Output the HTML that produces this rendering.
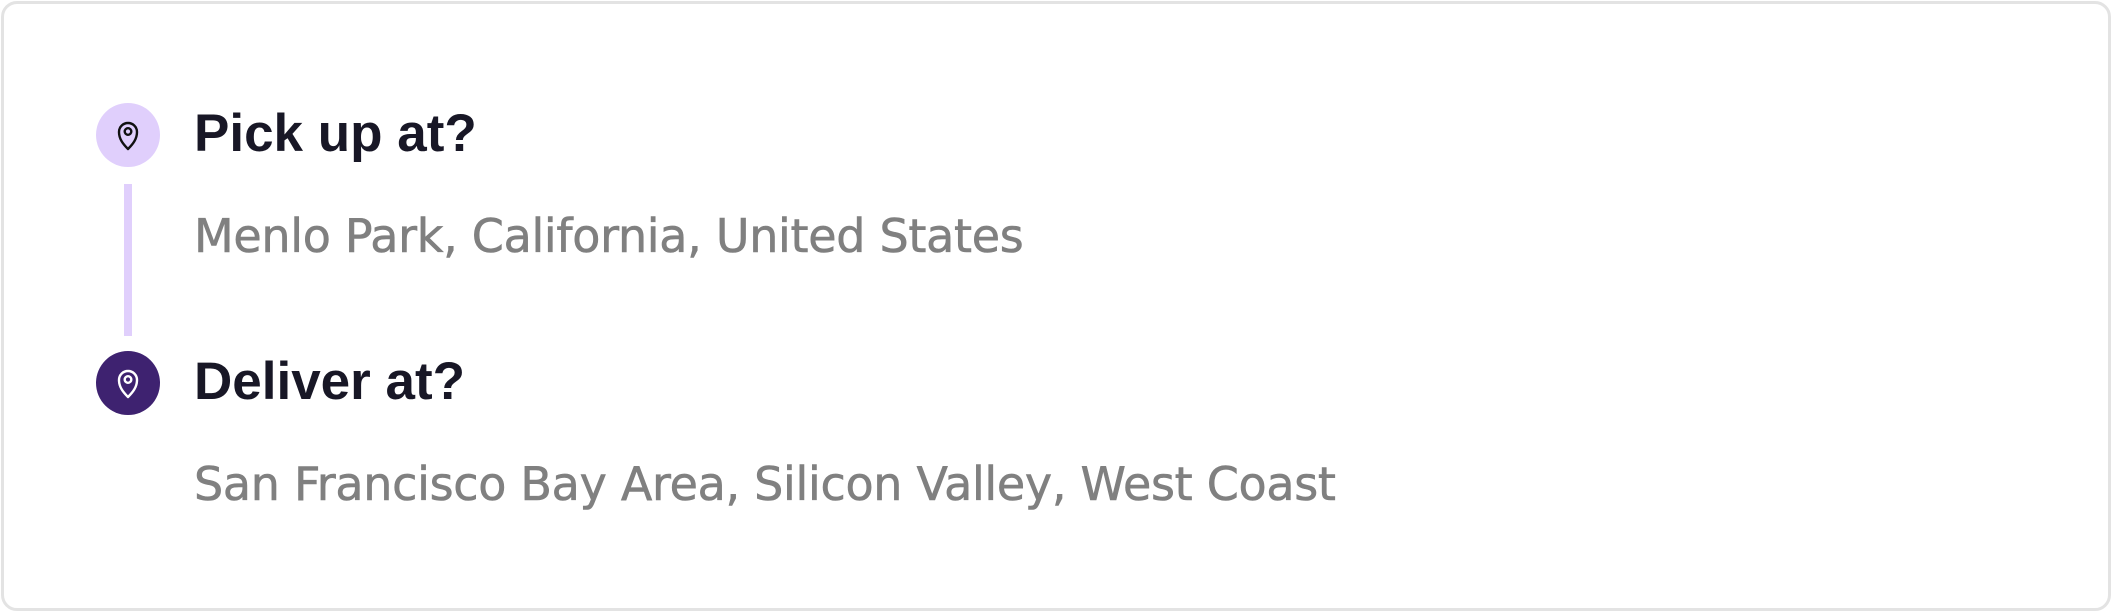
<!DOCTYPE html>
<html><head><meta charset="utf-8"><style>
html,body{margin:0;padding:0;width:2112px;height:612px;background:#fff;overflow:hidden}
.card{position:absolute;left:1px;top:1px;width:2104px;height:604px;border:3px solid #e3e3e3;border-radius:16px;background:#fff}
.c{position:absolute;width:64px;height:64px;border-radius:50%;left:92px}
.c svg{position:absolute;left:21px;top:17px}
.bar{position:absolute;left:120px;top:180px;width:8px;height:152px;background:#e0cffc}
.t{position:absolute;left:190px;font:600 53px/1 "Liberation Sans",sans-serif;color:#181726;white-space:nowrap;letter-spacing:0px}
.s{position:absolute;left:190px;font:46px/1 "DejaVu Sans",sans-serif;color:#808080;white-space:nowrap;letter-spacing:-0.3px;-webkit-text-stroke:0.6px #808080}
</style></head><body>
<div class="card">
<div class="c" style="top:99px;background:#e0cffc">
<svg width="22" height="31" viewBox="0 0 22 31"><path d="M11 29 C6 24 2 19 2 12 A9 9 0 0 1 20 12 C20 19 16 24 11 29Z" fill="none" stroke="#111" stroke-width="2.4" stroke-linejoin="round"/><circle cx="11" cy="11.5" r="3.3" fill="none" stroke="#111" stroke-width="2.4"/></svg>
</div>
<div class="bar"></div>
<div class="c" style="top:347px;background:#3e2270">
<svg width="22" height="31" viewBox="0 0 22 31"><path d="M11 29 C6 24 2 19 2 12 A9 9 0 0 1 20 12 C20 19 16 24 11 29Z" fill="none" stroke="#fff" stroke-width="2.4" stroke-linejoin="round"/><circle cx="11" cy="11.5" r="3.3" fill="none" stroke="#fff" stroke-width="2.4"/></svg>
</div>
<div class="t" style="top:103px">Pick up at?</div>
<div class="s" style="top:209px">Menlo Park, California, United States</div>
<div class="t" style="top:351px">Deliver at?</div>
<div class="s" style="top:457px">San Francisco Bay Area, Silicon Valley, West Coast</div>
</div>
</body></html>
